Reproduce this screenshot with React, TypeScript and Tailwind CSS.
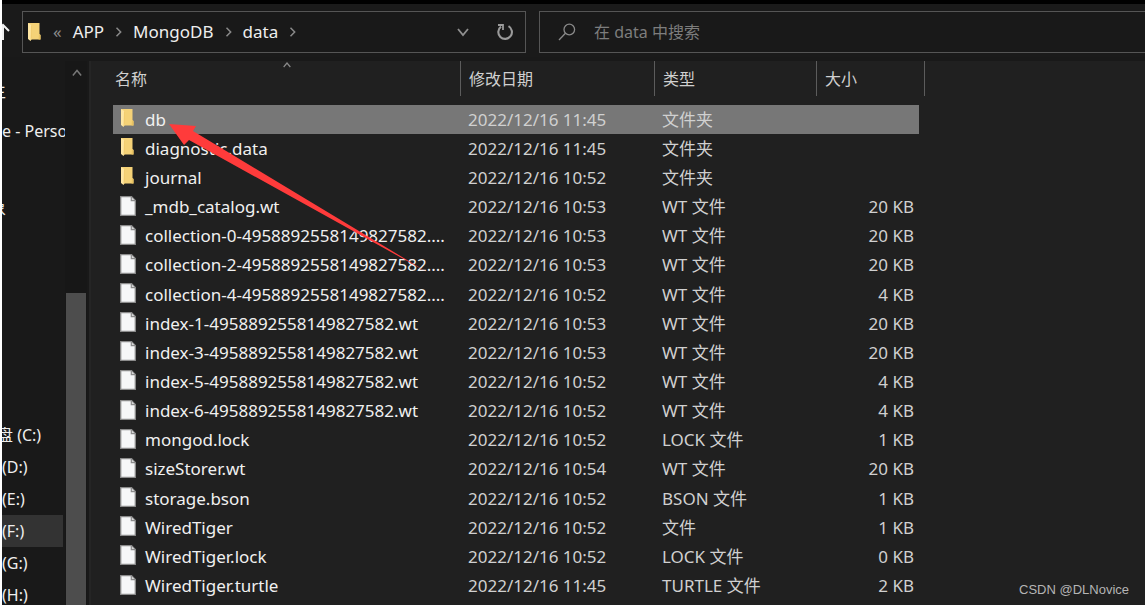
import React from 'react';

type Kind = 'folder' | 'file';
type Entry = { name: string; date: string; type: string; size: string; kind: Kind };

const file = (name: string, time: string, type: string, size: string): Entry => ({
  name, date: `2022/12/16 ${time}`, type, size, kind: 'file',
});
const folder = (name: string, time: string): Entry => ({
  name, date: `2022/12/16 ${time}`, type: '文件夹', size: '', kind: 'folder',
});

const entries: Entry[] = [
  folder('db', '11:45'),
  folder('diagnostic.data', '11:45'),
  folder('journal', '10:52'),
  file('_mdb_catalog.wt', '10:53', 'WT 文件', '20 KB'),
  file('collection-0-4958892558149827582....', '10:53', 'WT 文件', '20 KB'),
  file('collection-2-4958892558149827582....', '10:53', 'WT 文件', '20 KB'),
  file('collection-4-4958892558149827582....', '10:52', 'WT 文件', '4 KB'),
  file('index-1-4958892558149827582.wt', '10:53', 'WT 文件', '20 KB'),
  file('index-3-4958892558149827582.wt', '10:53', 'WT 文件', '20 KB'),
  file('index-5-4958892558149827582.wt', '10:52', 'WT 文件', '4 KB'),
  file('index-6-4958892558149827582.wt', '10:52', 'WT 文件', '4 KB'),
  file('mongod.lock', '10:52', 'LOCK 文件', '1 KB'),
  file('sizeStorer.wt', '10:54', 'WT 文件', '20 KB'),
  file('storage.bson', '10:52', 'BSON 文件', '1 KB'),
  file('WiredTiger', '10:52', '文件', '1 KB'),
  file('WiredTiger.lock', '10:52', 'LOCK 文件', '0 KB'),
  file('WiredTiger.turtle', '11:45', 'TURTLE 文件', '2 KB'),
];

const drives = ['盘 (C:)', '(D:)', '(E:)', '(F:)', '(G:)', '(H:)'];

function FolderIcon() {
  return (
    <svg viewBox="0 0 14 20" className="h-5 w-[14px] shrink-0" aria-hidden="true">
      <path d="M1 1h11.500v11l1 1v4.500H3z" fill="#f5d277" />
      <path d="M12 12l1.500 1v4.500h-2z" fill="#e8c262" />
      <path d="M1 1l4 2.500v12.500l-1.500 3L1 17z" fill="#ffe7a3" />
      <path d="M4 3l1 .5V16l-1.500 3z" fill="#f2cd70" />
    </svg>
  );
}

function FileIcon() {
  return (
    <svg viewBox="0 0 16 20" className="h-5 w-4 shrink-0" aria-hidden="true">
      <path d="M.7.7h10.800l3.800 3.800v14.800H.7z" fill="#f6f7f8" stroke="#8b8b8b" strokeWidth="1.300" />
      <path d="M11.300 1v3.700h3.700" fill="#d8d8d8" stroke="#8b8b8b" strokeWidth="1.200" />
    </svg>
  );
}

function Chevron({ dir, className }: { dir: 'right' | 'down' | 'up'; className: string }) {
  const paths = { right: 'M3 1l5 5-5 5', down: 'M1 3l5 6 5-6', up: 'M1 9l5-6 5 6' };
  return (
    <svg viewBox="0 0 12 12" className={className} fill="none" stroke="currentColor" aria-hidden="true">
      <path d={paths[dir]} strokeWidth="1.800" />
    </svg>
  );
}

function Crumb({ label }: { label: string }) {
  return (
    <li className="flex items-center">
      <a href="#" className="text-[17px] text-[#eeeeee]">{label}</a>
      <Chevron dir="right" className="mr-[9px] ml-[10px] h-[10px] w-[10px] text-[#8a8a8a]" />
    </li>
  );
}

function Toolbar() {
  return (
    <header className="flex h-[57px] items-center border-t-4 border-black bg-[#1a1a1a] pt-[2px]">
      <button aria-label="上移" className="flex h-10 w-5 shrink-0 items-center overflow-hidden text-[#f0f0f0]">
        <svg viewBox="0 0 16 18" className="-ml-[7px] h-[18px] w-4 shrink-0" fill="none" stroke="currentColor" strokeWidth="2" aria-hidden="true">
          <path d="M8 17V2M2 8l6-6 6 6" />
        </svg>
      </button>
      <nav aria-label="地址" className="flex h-[42px] w-[504px] shrink-0 items-center border border-[#555555] bg-[#191919] pl-[4px]">
        <FolderIcon />
        <span className="mr-[11px] ml-[12px] text-[17px] text-[#8a8a8a]">«</span>
        <ol className="flex items-center">
          <Crumb label="APP" />
          <Crumb label="MongoDB" />
          <Crumb label="data" />
        </ol>
        <button aria-label="历史位置" className="ml-auto flex h-full w-11 items-center justify-center text-[#8f8f8f]">
          <Chevron dir="down" className="h-3 w-3" />
        </button>
        <button aria-label="刷新" className="flex h-full w-10 items-center justify-center text-[#9a9a9a]">
          <svg viewBox="0 0 18 18" className="h-[18px] w-[18px]" fill="none" stroke="currentColor" strokeWidth="2.100" aria-hidden="true">
            <path d="M12.500 3.200a6.800 6.800 0 1 1-7.500 .5" />
            <path d="M2 2h5v5" strokeWidth="1.800" />
          </svg>
        </button>
      </nav>
      <label className="ml-[13px] flex h-[42px] min-w-0 flex-1 items-center border border-r-0 border-[#555555] bg-[#191919] pl-[18px]">
        <svg viewBox="0 0 18 18" className="h-[18px] w-[18px] shrink-0 text-[#8a8a8a]" fill="none" stroke="currentColor" strokeWidth="1.300" aria-hidden="true">
          <circle cx="11.300" cy="6.500" r="5.300" />
          <path d="M7.400 10.300L1 17" />
        </svg>
        <input
          aria-label="在 data 中搜索"
          placeholder="在 data 中搜索"
          className="ml-[18px] min-w-0 flex-1 bg-transparent text-base text-[#cccccc] outline-none placeholder:text-[#7d7d7d]"
        />
      </label>
    </header>
  );
}

function Sidebar() {
  return (
    <aside className="flex w-[87px] shrink-0 bg-[#191919] text-[16px] text-[#eeeeee]">
      <ul className="w-[63px] shrink-0 overflow-hidden pt-[14px] whitespace-nowrap">
        <li className="h-8 leading-8"><span className="-ml-3">主</span></li>
        <li className="mt-2 h-8 leading-8">e - Personal</li>
        <li className="mt-[45px] h-8 leading-8"><span className="-ml-3">象</span></li>
        <li className="h-[195px]" aria-hidden="true" />
        {drives.map((d) => (
          <li key={d} className={d === '(F:)' ? 'h-8 w-[61px] bg-[#333333] leading-8' : 'h-8 leading-8'}>
            {d === '盘 (C:)' ? <span className="-ml-[5px]">{d}</span> : d}
          </li>
        ))}
      </ul>
      <div className="flex w-[22px] flex-col bg-[#171717] pl-[1px]">
        <button aria-label="向上滚动" className="flex h-6 items-center justify-center text-[#777777]">
          <Chevron dir="up" className="h-3 w-[10px]" />
        </button>
        <div className="mt-[208px] w-5 flex-1 bg-[#4d4d4d]" />
      </div>
    </aside>
  );
}

function HeaderCell({ label, sorted }: { label: string; sorted?: boolean }) {
  return (
    <button
      className={
        sorted
          ? 'relative flex h-[35px] w-full items-center pl-[2px] text-base'
          : 'flex h-[35px] w-full items-center border-l border-[#5c5c5c] pl-2 text-base'
      }
    >
      {label}
      {sorted && <Chevron dir="up" className="absolute inset-x-0 top-0 mx-auto h-2 w-3 text-[#8a8a8a]" />}
    </button>
  );
}

function Row({ entry, selected }: { entry: Entry; selected: boolean }) {
  const fill = selected ? 'bg-[#777777] ' : '';
  return (
    <tr className="h-[29px]">
      <td className={fill + 'p-0 pl-[7px]'}>
        <div className="flex items-center">
          <span className="flex w-[25px] shrink-0 pb-[3px]">{entry.kind === 'folder' ? <FolderIcon /> : <FileIcon />}</span>
          <span className="text-[17px] leading-6 whitespace-nowrap text-[#f0f0f0]">{entry.name}</span>
        </div>
      </td>
      <td className={fill + 'p-0 pl-[8px] text-[17px] leading-6'}>{entry.date}</td>
      <td className={fill + 'p-0 pl-[8px] text-[17px] leading-6'}>{entry.type}</td>
      <td className={fill + 'p-0 pr-[5px] text-right text-[17px] leading-6'}>{entry.size}</td>
      <td className="p-0" />
    </tr>
  );
}

function FileList() {
  return (
    <main className="relative min-w-0 flex-1 overflow-hidden border-l-2 border-[#252525] bg-[#202020] pl-[22px]">
      <table className="h-[569px] table-fixed border-separate border-spacing-0 text-[#d0d0d0]">
        <colgroup>
          <col className="w-[347px]" />
          <col className="w-[194px]" />
          <col className="w-[162px]" />
          <col className="w-[103px]" />
          <col className="w-[6px]" />
        </colgroup>
        <thead>
          <tr className="h-11 text-left align-top font-normal">
            <th className="p-0 font-normal"><HeaderCell label="名称" sorted /></th>
            <th className="p-0 font-normal"><HeaderCell label="修改日期" /></th>
            <th className="p-0 font-normal"><HeaderCell label="类型" /></th>
            <th className="p-0 font-normal" colSpan={2}>
              <div className="border-r border-[#5c5c5c]"><HeaderCell label="大小" /></div>
            </th>
          </tr>
        </thead>
        <tbody>
          {entries.map((e, i) => <Row key={e.name} entry={e} selected={i === 0} />)}
          <tr className="h-[29px]">
            <td className="p-0 pl-[7px]"><FileIcon /></td>
            <td colSpan={4} className="p-0" />
          </tr>
        </tbody>
      </table>
      <svg viewBox="0 0 260 150" className="pointer-events-none absolute top-[62px] left-[77px] h-[150px] w-[260px]" aria-hidden="true">
        <path d="M1 1L28 3L25 8L259 149L21 17L16 22Z" fill="#ff3b3b" />
      </svg>
      <p className="absolute right-[16px] bottom-[7px] font-['Liberation_Sans'] text-[13px] leading-4 text-[#b5b5b5]">CSDN @DLNovice</p>
    </main>
  );
}

export default function App() {
  return (
    <div className="flex h-screen flex-col overflow-hidden border-l-2 border-white bg-[#191919] font-['Noto_Sans','Noto_Sans_CJK_SC',sans-serif]">
      <Toolbar />
      <div className="flex min-h-0 flex-1 bg-[#191919] pt-1">
        <Sidebar />
        <FileList />
      </div>
    </div>
  );
}
